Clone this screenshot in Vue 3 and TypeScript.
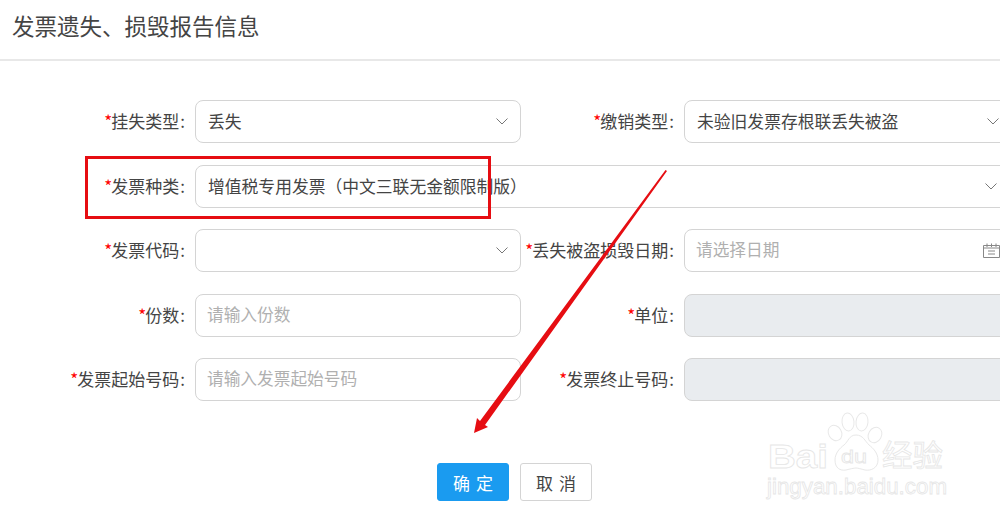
<script setup lang="ts">
interface Field {
  label: string
  kind: 'select' | 'input' | 'date' | 'disabled'
  value?: string
  placeholder?: string
  wide?: boolean
}
const fields: Field[] = [
  { label: '挂失类型', kind: 'select', value: '丢失' },
  { label: '缴销类型', kind: 'select', value: '未验旧发票存根联丢失被盗' },
  { label: '发票种类', kind: 'select', value: '增值税专用发票（中文三联无金额限制版）', wide: true },
  { label: '发票代码', kind: 'select' },
  { label: '丢失被盗损毁日期', kind: 'date', placeholder: '请选择日期' },
  { label: '份数', kind: 'input', placeholder: '请输入份数' },
  { label: '单位', kind: 'disabled' },
  { label: '发票起始号码', kind: 'input', placeholder: '请输入发票起始号码' },
  { label: '发票终止号码', kind: 'disabled' },
]
</script>

<template>
  <div class="page">
    <header class="head">发票遗失、损毁报告信息</header>
    <div class="form">
      <template v-for="f in fields" :key="f.label">
        <label class="label"><i>*</i>{{ f.label }}<span class="colon">:</span></label>
        <div class="box" :class="[f.kind, { wide: f.wide }]">
          <span v-if="f.value" class="value">{{ f.value }}</span>
          <span v-else-if="f.placeholder" class="ph">{{ f.placeholder }}</span>
          <svg v-if="f.kind === 'select'" class="chev" viewBox="0 0 12 7" width="12" height="7">
            <path d="M.5 .5L6 6l5.500-5.500" fill="none" stroke="#777" stroke-width="1" />
          </svg>
          <svg v-if="f.kind === 'date'" class="cal" viewBox="0 0 17 15" width="17" height="15">
            <path d="M.5 2.500h16v12H.5zM.5 5h16M4 .5v3.500M8.500 .5v3.500M13 .5v3.500M5 8h7M5 11h7" fill="none" stroke="#888" stroke-width="1" />
          </svg>
        </div>
      </template>
    </div>
    <div class="actions">
      <button class="btn primary" type="button">确定</button>
      <button class="btn" type="button">取消</button>
    </div>

    <div class="redbox"></div>
    <svg class="arrow" viewBox="0 0 1000 520" width="1000" height="520">
      <polygon points="665.500,170 667,171 485,425 488,427 474,433 477,418 480,421" fill="#e60d12" />
    </svg>
    <svg class="mark" viewBox="0 0 200 100" width="200" height="100">
      <g fill="#fff" stroke="#e8e8e8" stroke-width="1">
        <ellipse cx="70" cy="28" rx="6.500" ry="8" transform="rotate(-30 70 28)" />
        <ellipse cx="83" cy="17" rx="6" ry="9" transform="rotate(-6 83 17)" />
        <ellipse cx="97" cy="17" rx="6" ry="9" transform="rotate(6 97 17)" />
        <ellipse cx="110" cy="30" rx="6.500" ry="8" transform="rotate(30 110 30)" />
        <path d="M91 30c7 0 9 6 13 10 4 3 9 8 9 15 0 8-7 11-13 10-4-1-7-2-9-2s-6 1-10 2c-6 1-11-2-11-10 0-7 5-12 9-15s5-10 12-10z" />
      </g>
      <text x="3" y="63" class="big" textLength="60" lengthAdjust="spacingAndGlyphs">Bai</text>
      <text x="76" y="58" class="du" textLength="26" lengthAdjust="spacingAndGlyphs">du</text>
      <text x="117" y="61" class="cn" textLength="61" lengthAdjust="spacingAndGlyphs">经验</text>
      <text x="2" y="89" class="url" textLength="180" lengthAdjust="spacingAndGlyphs">jingyan.baidu.com</text>
    </svg>
  </div>
</template>

<style>
html, body { margin: 0; background: #fff; overflow: hidden; }
</style>

<style scoped>
.page {
  position: relative;
  width: 1000px;
  height: 520px;
  overflow: hidden;
  background: #fff;
  font-family: "Noto Sans CJK SC", "Liberation Sans", sans-serif;
  color: #444;
}
.head {
  box-sizing: border-box;
  height: 61px;
  padding: 9px 0 0 12px;
  font-size: 22.500px;
  line-height: 32px;
  color: #444;
  border-bottom: 2px solid #e8e8e8;
}
.form {
  display: grid;
  grid-template-columns: 195px 326px 163px 328px;
  grid-auto-rows: 43px;
  row-gap: 21.500px;
  padding-top: 39px;
}
.label {
  padding-right: 10px;
  text-align: right;
  white-space: nowrap;
  font-size: 17px;
  line-height: 41px;
  color: #444;
}
.label i {
  margin-right: -1px;
  color: #f00;
  font-style: normal;
}
.colon { margin-left: 1px; }
.box {
  box-sizing: border-box;
  height: 43px;
  display: flex;
  align-items: center;
  justify-content: space-between;
  padding: 0 12px;
  border: 1px solid #d4d4d4;
  border-radius: 8px;
  font-size: 16.800px;
  line-height: 41px;
}
.box.wide { grid-column: 2 / span 3; }
.box.disabled { background: #e9ecef; }
.value { color: #444; }
.ph {
  margin: -2px 0 0 -1px;
  font-size: 16.700px;
  color: #b0b0b0;
}
.chev { margin-left: auto; flex: none; }
.box.wide .chev { margin-right: 2px; }
.cal { margin-left: auto; margin-right: -1px; flex: none; }
.actions {
  display: flex;
  justify-content: center;
  gap: 11px;
  margin-top: 62px;
  width: 1029px;
}
.btn {
  box-sizing: border-box;
  width: 72px;
  height: 38px;
  padding: 0 0 0 6px;
  border: 1px solid #d4d4d4;
  border-radius: 3px;
  background: #fff;
  color: #444;
  font: inherit;
  font-size: 17px;
  letter-spacing: 6px;
}
.btn.primary {
  border-color: #1a9bf0;
  background: #1a9bf0;
  color: #fff;
}
.redbox {
  position: absolute;
  left: 85px;
  top: 156px;
  width: 406px;
  height: 63px;
  box-sizing: border-box;
  border: 3px solid #e60d12;
}
.arrow {
  position: absolute;
  left: 0;
  top: 0;
  pointer-events: none;
}
.mark {
  position: absolute;
  left: 765px;
  top: 405px;
}
.mark text {
  fill: #fff;
  stroke: #e6e6e6;
  stroke-width: 0.8;
  font-family: "Liberation Sans", "Noto Sans CJK SC", sans-serif;
}
.big { font-size: 34px; font-weight: 700; }
.du { font-size: 19px; }
.cn { font-size: 30px; }
.url { font-size: 22px; }
</style>
